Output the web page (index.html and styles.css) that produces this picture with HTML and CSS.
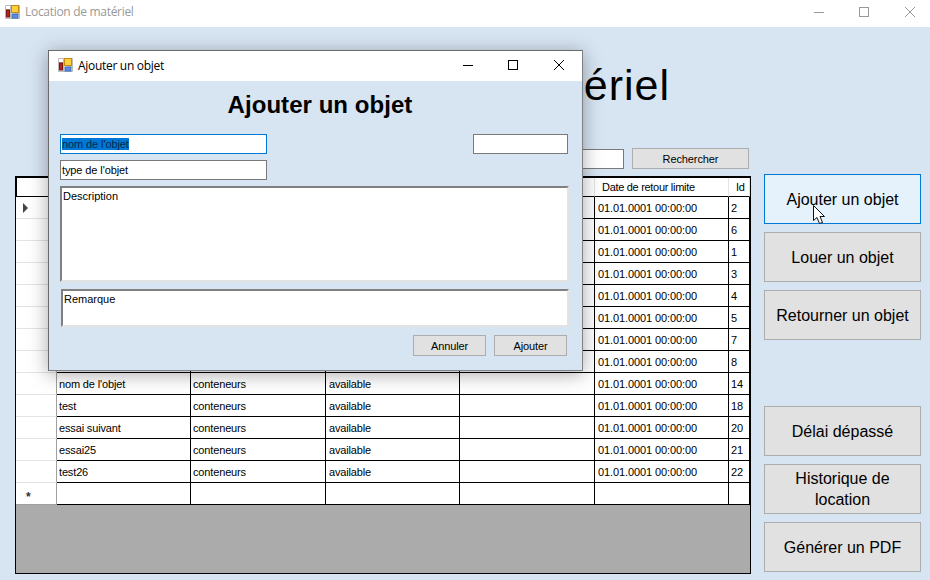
FILE: index.html
```html
<!DOCTYPE html>
<html>
<head>
    <title>Location de matériel</title>
    <link rel="stylesheet" href="styles.css">
</head>
<body>
    <div class="titlebar">
        <svg class="app-icon" width="15" height="14" viewBox="0 0 15 14">
            <path d="M0.5 0.5h14v13h-14zM5.5 0.5v13M0.5 4.5h5M9.5 9h5" fill="#fff" stroke="#bbb"/>
            <rect x="6.5" y="0.5" width="7" height="7" fill="#fcd03a" stroke="#c98a12"/>
            <rect x="1.5" y="5" width="3" height="7" fill="#b5261e" stroke="#7a140f"/>
            <rect x="7" y="9" width="6" height="4" fill="#5f8fdc" stroke="#3d6cb8"/>
        </svg>
        <span class="titlebar-text titlebar-text-off">Location de matériel</span>
        <div class="win-btns win-btns-off">
            <svg class="win-btn win-btn-min" width="10" height="10" viewBox="0 0 10 10"><path d="M0 5.5h10" stroke="currentColor"/></svg>
            <svg class="win-btn win-btn-max" width="10" height="10" viewBox="0 0 10 10"><rect x="0.5" y="0.5" width="9" height="9" fill="none" stroke="currentColor"/></svg>
            <svg class="win-btn" width="10" height="10" viewBox="0 0 10 10"><path d="M0 0l10 10M10 0l-10 10" stroke="currentColor"/></svg>
        </div>
    </div>

    <div class="main">
        <div class="left">
            <h1 class="main-title">Location de matériel</h1>
            <div class="search-row">
                <div class="search-input"></div>
                <button class="btn btn-search">Rechercher</button>
            </div>
            <div class="grid-box">
                <table class="grid">
                    <colgroup>
                        <col class="col-head">
                        <col class="col-a">
                        <col class="col-b">
                        <col class="col-a">
                        <col class="col-b">
                        <col class="col-a">
                        <col class="col-id">
                    </colgroup>
                    <thead>
                        <tr>
                            <th class="row-head"></th>
                            <th></th>
                            <th></th>
                            <th></th>
                            <th></th>
                            <th>Date de retour limite</th>
                            <th>Id</th>
                        </tr>
                    </thead>
                    <tbody>
                        <tr><td class="row-head"><span class="row-arrow"></span></td><td></td><td></td><td></td><td></td><td>01.01.0001 00:00:00</td><td>2</td></tr>
                        <tr><td class="row-head"></td><td></td><td></td><td></td><td></td><td>01.01.0001 00:00:00</td><td>6</td></tr>
                        <tr><td class="row-head"></td><td></td><td></td><td></td><td></td><td>01.01.0001 00:00:00</td><td>1</td></tr>
                        <tr><td class="row-head"></td><td></td><td></td><td></td><td></td><td>01.01.0001 00:00:00</td><td>3</td></tr>
                        <tr><td class="row-head"></td><td></td><td></td><td></td><td></td><td>01.01.0001 00:00:00</td><td>4</td></tr>
                        <tr><td class="row-head"></td><td></td><td></td><td></td><td></td><td>01.01.0001 00:00:00</td><td>5</td></tr>
                        <tr><td class="row-head"></td><td></td><td></td><td></td><td></td><td>01.01.0001 00:00:00</td><td>7</td></tr>
                        <tr><td class="row-head"></td><td></td><td></td><td></td><td></td><td>01.01.0001 00:00:00</td><td>8</td></tr>
                        <tr><td class="row-head"></td><td>nom de l'objet</td><td>conteneurs</td><td>available</td><td></td><td>01.01.0001 00:00:00</td><td>14</td></tr>
                        <tr><td class="row-head"></td><td>test</td><td>conteneurs</td><td>available</td><td></td><td>01.01.0001 00:00:00</td><td>18</td></tr>
                        <tr><td class="row-head"></td><td>essai suivant</td><td>conteneurs</td><td>available</td><td></td><td>01.01.0001 00:00:00</td><td>20</td></tr>
                        <tr><td class="row-head"></td><td>essai25</td><td>conteneurs</td><td>available</td><td></td><td>01.01.0001 00:00:00</td><td>21</td></tr>
                        <tr><td class="row-head"></td><td>test26</td><td>conteneurs</td><td>available</td><td></td><td>01.01.0001 00:00:00</td><td>22</td></tr>
                        <tr class="new-row"><td class="row-head">*</td><td></td><td></td><td></td><td></td><td></td><td></td></tr>
                    </tbody>
                </table>
            </div>
        </div>

        <div class="actions">
            <button class="btn btn-action btn-hover">Ajouter un objet</button>
            <button class="btn btn-action">Louer un objet</button>
            <button class="btn btn-action">Retourner un objet</button>
            <button class="btn btn-action btn-spaced">Délai dépassé</button>
            <button class="btn btn-action">Historique de location</button>
            <button class="btn btn-action">Générer un PDF</button>
        </div>
    </div>

    <!-- dialog floats over the main window -->
    <div class="dialog">
        <div class="titlebar dialog-bar">
            <svg class="app-icon" width="15" height="14" viewBox="0 0 15 14">
                <path d="M0.5 0.5h14v13h-14zM5.5 0.5v13M0.5 4.5h5M9.5 9h5" fill="#fff" stroke="#bbb"/>
                <rect x="6.5" y="0.5" width="7" height="7" fill="#fcd03a" stroke="#c98a12"/>
                <rect x="1.5" y="5" width="3" height="7" fill="#b5261e" stroke="#7a140f"/>
                <rect x="7" y="9" width="6" height="4" fill="#5f8fdc" stroke="#3d6cb8"/>
            </svg>
            <span class="titlebar-text">Ajouter un objet</span>
            <div class="win-btns">
                <svg class="win-btn win-btn-min" width="10" height="10" viewBox="0 0 10 10"><path d="M0 5.5h10" stroke="currentColor"/></svg>
                <svg class="win-btn win-btn-max" width="10" height="10" viewBox="0 0 10 10"><rect x="0.5" y="0.5" width="9" height="9" fill="none" stroke="currentColor"/></svg>
                <svg class="win-btn" width="10" height="10" viewBox="0 0 10 10"><path d="M0 0l10 10M10 0l-10 10" stroke="currentColor"/></svg>
            </div>
        </div>
        <div class="dialog-body">
            <h2 class="dialog-title">Ajouter un objet</h2>
            <div class="field-row">
                <div class="field field-name field-focus"><span class="selected">nom de l'objet</span></div>
                <div class="field field-small"></div>
            </div>
            <div class="field field-name field-type">type de l'objet</div>
            <div class="area area-desc">Description</div>
            <div class="area area-note">Remarque</div>
            <div class="dialog-btns">
                <button class="btn btn-dialog">Annuler</button>
                <button class="btn btn-dialog">Ajouter</button>
            </div>
        </div>
    </div>

    <svg class="cursor" width="14" height="19" viewBox="0 0 14 19">
        <path d="M0.5 0.5V15.5L4 12.5L6.5 18.5L9.5 17.5L7 11.5H11.5Z" fill="#fff" stroke="#111"/>
    </svg>
</body>
</html>
```

FILE: styles.css
```css
html, body {
    margin: 0;
    padding: 0;
}

body {
    width: 930px;
    height: 580px;
    overflow: hidden;
    position: relative;
    background-color: #d7e4f2;
    font-family: "Liberation Sans", Arial, sans-serif;
    font-size: 11px;
    color: #000;
}

/* window title bars */
.titlebar {
    display: flex;
    align-items: center;
    height: 27px;
    padding-left: 5px;
    padding-bottom: 4px;
    box-sizing: border-box;
    background-color: #fff;
}

.app-icon {
    flex: none;
}

.titlebar-text {
    margin-left: 5px;
    font-family: "Open Sans", sans-serif;
    font-size: 12px;
    letter-spacing: -0.3px;
}

.titlebar-text-off {
    color: #999;
}

.win-btns {
    display: flex;
    gap: 35px;
    margin-left: auto;
    margin-right: 15px;
}

.win-btns-off {
    color: #999;
}

.win-btn-max {
    margin-right: 1px;
}

/* main window */
.main {
    display: flex;
    gap: 13px;
    padding-left: 15px;
}

.left {
    width: 736px;
}

.main-title {
    height: 121px;
    margin: 0;
    padding-right: 81px;
    box-sizing: border-box;
    padding-top: 29px;
    font-size: 43px;
    font-weight: normal;
    line-height: 58px;
    letter-spacing: 1px;
    text-align: right;
}

.search-row {
    display: flex;
    justify-content: flex-end;
    gap: 8px;
    height: 28px;
    padding-right: 2px;
}

.search-input {
    width: 200px;
    height: 20px;
    margin-top: 1px;
    background-color: #fff;
    border: 1px solid #7a7a7a;
    box-sizing: border-box;
}

.btn {
    padding: 0;
    background-color: #e1e1e1;
    border: 1px solid #adadad;
    box-sizing: border-box;
    font-family: "Liberation Sans", Arial, sans-serif;
    font-size: 11px;
    letter-spacing: -0.1px;
    color: #000;
}

.btn-search {
    width: 117px;
    height: 21px;
}

/* data grid */
.grid-box {
    height: 398px;
    background-color: #ababab;
    border: 1px solid #000;
    border-top-width: 2px;
    box-sizing: border-box;
}

.grid {
    table-layout: fixed;
    width: 733px;
    border-collapse: separate;
    border-spacing: 0;
    background-color: #fff;
    letter-spacing: -0.15px;
}

.col-head {
    width: 41px;
}

.col-a {
    width: 134px;
}

.col-b {
    width: 135px;
}

.col-id {
    width: 21px;
}

.grid th {
    height: 19px;
    padding: 0 0 0 7px;
    box-sizing: border-box;
    border-bottom: 1px solid #000;
    border-right: 1px solid #e3e3e3;
    font-weight: normal;
    letter-spacing: -0.3px;
    text-align: left;
}

.grid td {
    height: 22px;
    padding: 0 0 0 2px;
    box-sizing: border-box;
    border-bottom: 1px solid #000;
    border-right: 1px solid #000;
    white-space: nowrap;
    overflow: hidden;
}

.grid td:nth-child(4),
.grid td:nth-child(6) {
    padding-left: 3px;
}

.grid td:nth-child(6) {
    letter-spacing: -0.1px;
}

.grid th.row-head {
    border-left: 1px solid #000;
    border-right-color: #a0a0a0;
}

.grid td.row-head {
    padding-left: 7px;
    border-bottom-color: #e3e3e3;
    border-right-color: #a0a0a0;
}

.grid .new-row td.row-head {
    padding: 6px 0 0 10px;
    border-bottom-color: #a0a0a0;
    font-size: 12px;
    font-weight: bold;
    color: #333;
}

.row-arrow {
    display: block;
    width: 0;
    height: 0;
    border-style: solid;
    border-width: 5px 0 5px 5px;
    border-color: transparent transparent transparent #444;
}

/* right column */
.actions {
    display: flex;
    flex-direction: column;
    gap: 8px;
    width: 157px;
    padding-top: 147px;
}

.btn-action {
    height: 50px;
    padding: 0 5px;
    font-size: 16px;
    letter-spacing: 0;
    line-height: 21px;
}

.btn-hover {
    background-color: #e5f1fb;
    border-color: #0078d7;
}

.btn-spaced {
    margin-top: 58px;
}

/* dialog */
.dialog {
    position: absolute;
    left: 48px;
    top: 50px;
    width: 535px;
    height: 321px;
    background-color: #d7e4f2;
    border: 1px solid #7c8288;
    border-top-color: #6a6a6a;
    border-left-color: #6a6a6a;
    box-sizing: border-box;
    box-shadow: 0 3px 18px rgba(0, 0, 0, 0.35);
}

.dialog-bar {
    height: 30px;
    padding-left: 9px;
    padding-bottom: 2px;
}

.dialog-bar .win-btns {
    margin-right: 18px;
}

.dialog-body {
    display: flex;
    flex-direction: column;
    padding: 0 14px 0 11px;
}

.dialog-title {
    margin: 0;
    height: 53px;
    padding-left: 12px;
    font-size: 24px;
    line-height: 48px;
    letter-spacing: 0.05px;
    text-align: center;
}

.field-row {
    display: flex;
    justify-content: space-between;
}

.field {
    height: 20px;
    padding: 0 0 0 1px;
    background-color: #fff;
    border: 1px solid #7a7a7a;
    box-sizing: border-box;
    line-height: 18px;
    letter-spacing: -0.1px;
}

.field-name {
    width: 207px;
}

.field-focus {
    border-color: #0078d7;
}

.field-small {
    width: 95px;
}

.field-type {
    margin-top: 6px;
}

.selected {
    background-color: #0078d7;
    color: #04284d;
}

.area {
    background-color: #fff;
    border-style: solid;
    border-width: 2px;
    border-color: #808080 #e3e3e3 #e3e3e3 #808080;
    box-sizing: border-box;
    padding: 2px 1px;
    line-height: 13px;
}

.area-desc {
    height: 96px;
    margin-top: 6px;
    width: 509px;
}

.area-note {
    height: 38px;
    margin-top: 7px;
    margin-left: 1px;
    width: 508px;
}

.dialog-btns {
    display: flex;
    justify-content: flex-end;
    gap: 8px;
    margin-top: 8px;
    padding-right: 1px;
}

.btn-dialog {
    width: 73px;
    height: 21px;
}

.cursor {
    position: absolute;
    left: 813px;
    top: 205px;
}
```
